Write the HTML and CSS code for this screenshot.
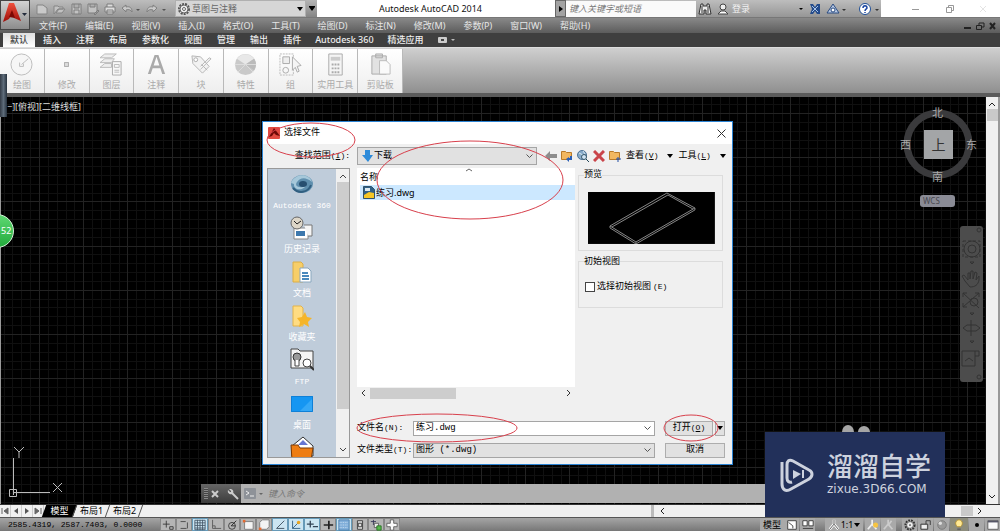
FILE: index.html
```html
<!DOCTYPE html>
<html lang="zh-CN">
<head>
<meta charset="utf-8">
<title>Autodesk AutoCAD 2014</title>
<link rel="stylesheet" href="styles.css">
</head>
<body>
<header class="top">
  <button class="app-button" aria-label="应用程序菜单">
    <svg width="30" height="30" viewBox="0 0 30 30"><defs><linearGradient id="red" x2="0" y2="1"><stop stop-color="#f0503c"/><stop offset="1" stop-color="#9c0d08"/></linearGradient></defs><path d="M9 3h5l7 18-7-3-2-4-3 5-6 3z" fill="url(#red)"/><path d="M12 10l3 8-6-1z" fill="#7c0803"/><path d="M22 13h5l-2.500 3z" fill="#222a3a"/></svg>
  </button>
  <div class="titlebar">
    <div class="quick">
      <button aria-label="新建"><svg width="14" height="14" viewBox="0 0 14 14"><path d="M2 3h6l4 3v6H2z" fill="#c9c9c9" stroke="#858585"/></svg></button>
      <button aria-label="打开"><svg width="14" height="14" viewBox="0 0 14 14"><path d="M2 4h4l1 1h4v2H6l-4 5zM4 11l3-4h6l-3 4z" fill="#c2c2c2" stroke="#858585"/></svg></button>
      <button aria-label="保存"><svg width="14" height="14" viewBox="0 0 14 14"><path d="M3 2h9v10H3zM5 2v4h5V2M5 12V8h5v4" fill="#c2c2c2" stroke="#7d7d7d"/></svg></button>
      <button aria-label="另存为"><svg width="14" height="14" viewBox="0 0 14 14"><path d="M2 2h9v9H2zM4 2v3h5V2M8 12l4-4 1 1-4 4z" fill="#c2c2c2" stroke="#7d7d7d"/></svg></button>
      <button aria-label="打印"><svg width="14" height="14" viewBox="0 0 14 14"><path d="M4 5V2h6v3M2 5h10v5H2zM4 8h6v4H4z" fill="#ddd" stroke="#7d7d7d"/></svg></button>
      <button class="arrowed" aria-label="放弃"><svg width="22" height="14" viewBox="0 0 22 14"><path d="M2 6l4-3v2c4-1 6 1 6 5-1-2-3-3-6-2v2z" fill="#c9c9c9" stroke="#808080"/><path d="M16 7h4l-2 2z" fill="#555"/></svg></button>
      <button class="arrowed" aria-label="重做"><svg width="22" height="14" viewBox="0 0 22 14"><path d="M12 6L8 3v2C4 4 2 6 2 10c1-2 3-3 6-2v2z" fill="#c9c9c9" stroke="#808080"/><path d="M17 7h4l-2 2z" fill="#555"/></svg></button>
    </div>
    <div class="workspace">
      <svg width="14" height="14" viewBox="0 0 14 14"><circle cx="7" cy="7" r="5" fill="#eee" stroke="#555" stroke-width="2" stroke-dasharray="2 1"/><circle cx="7" cy="7" r="4" fill="#eee" stroke="#666"/><circle cx="7" cy="7" r="1.500" fill="#fff" stroke="#666"/></svg>
      <select aria-label="工作空间"><option>草图与注释</option></select>
      <svg class="tri" width="6" height="4"><path d="M0 0h6L3 4z"/></svg>
    </div>
    <button class="customize" aria-label="自定义"><svg width="6" height="5"><path d="M0 0h6v1L3 5 0 1z"/></svg></button>
    <h1>Autodesk AutoCAD 2014</h1>
    <div class="infocenter">
      <button class="expand" aria-label="展开"><svg width="4" height="6"><path d="M0 0l4 3-4 3z"/></svg></button>
      <input class="search" type="text" placeholder="键入关键字或短语" aria-label="搜索">
      <button aria-label="搜索按钮"><svg width="14" height="14" viewBox="0 0 14 14"><path d="M3 2h2v2h4V2h2l2 10H8V8H6v4H1z" fill="#ececec" stroke="#333"/><path d="M4 4v7M10 4v7" stroke="#333"/></svg></button>
      <button class="login"><svg width="14" height="14" viewBox="0 0 14 14"><circle cx="7" cy="5" r="3" fill="#eee" stroke="#444"/><path d="M2 12l3-3h4l3 3z" fill="#fff" stroke="#444"/></svg>登录</button>
      <svg class="login-arrow" width="5" height="4"><path d="M1 1h4L3 3z"/></svg>
      <button aria-label="Exchange"><svg width="14" height="14" viewBox="0 0 14 14"><path d="M2 2h3l2 3 2-3h3v10H9L7 9l-2 3H2l2-5z" fill="#234b8c"/><path d="M4 4l6 6M10 4l-6 6" stroke="#a9c5ea"/></svg></button>
      <button class="arrowed" aria-label="联机"><svg width="22" height="14" viewBox="0 0 22 14"><path d="M8 2l6 9H2z" fill="#b9cae6" stroke="#284a80"/><circle cx="8" cy="8" r="2" fill="#fff" stroke="#284a80"/><path d="M17 7h4l-2 2z" fill="#333"/></svg></button>
      <button class="help" aria-label="帮助"><svg width="22" height="14" viewBox="0 0 22 14"><circle cx="8" cy="7" r="5.500" fill="#fff" stroke="#1f4f97"/><path d="M6 6c0-3 4-3 4 0 0 1-2 1-2 3M8 10v1" fill="none" stroke="#1844a0" stroke-width="1.500"/><path d="M18 7h4l-2 2z" fill="#333"/></svg></button>
    </div>
    <div class="window-controls">
      <button aria-label="最小化"><svg width="8" height="8"><path d="M0 4.500h7" stroke="#999"/></svg></button>
      <button aria-label="还原"><svg width="8" height="8"><path d="M.5 2.500h5v5h-5zM2.500 2V.5h5v5H6" fill="none" stroke="#999"/></svg></button>
      <button aria-label="关闭"><svg width="8" height="8"><path d="M1 1l6 6M7 1L1 7" stroke="#e4e4e4"/></svg></button>
    </div>
  </div>
  <nav class="menubar">
    <button>文件(F)</button><button>编辑(E)</button><button>视图(V)</button><button>插入(I)</button><button>格式(O)</button><button>工具(T)</button><button>绘图(D)</button><button>标注(N)</button><button>修改(M)</button><button>参数(P)</button><button>窗口(W)</button><button>帮助(H)</button>
    <div class="doc-controls">
      <button aria-label="最小化图形"><svg width="8" height="8"><path d="M0 6h7" stroke="#222" stroke-width="2"/></svg></button>
      <button aria-label="还原图形"><svg width="9" height="8"><path d="M.5 3.500h5v4h-5zM3 3V1h5v4H6" fill="none" stroke="#222"/></svg></button>
      <button aria-label="关闭图形"><svg width="8" height="8"><path d="M1 1l5 6M6 1L1 7" stroke="#222" stroke-width="2"/></svg></button>
    </div>
  </nav>
</header>

<nav class="tabs">
  <button class="active">默认</button><button>插入</button><button>注释</button><button>布局</button><button>参数化</button><button>视图</button><button>管理</button><button>输出</button><button>插件</button><button>Autodesk 360</button><button>精选应用</button>
  <button class="minimize" aria-label="最小化功能区"><svg width="18" height="6"><rect width="9" height="6" rx="1" fill="#ccc"/><rect x="3" y="2" width="3" height="2" fill="#444"/><path d="M13 2h4l-2 2z" fill="#bbb"/></svg></button>
</nav>

<section class="ribbon">
  <div class="panels">
    <button><svg viewBox="0 0 24 24"><circle cx="12" cy="12" r="11" fill="#f6f6f6" stroke="#bbb"/><path d="M12 12l7-6M10 10v4h4v-3" fill="none" stroke="#bbb"/></svg>绘图</button>
    <button><svg viewBox="0 0 24 24"><rect x="10" y="10" width="4" height="4" fill="#ddd" stroke="#aaa"/></svg>修改</button>
    <button><svg viewBox="0 0 24 24"><path d="M5 1h12l-5 4H0zM5 6h10l-3 4H0zM5 11h7v4H0z" fill="#eee" stroke="#bbb"/><path d="M13 9h9v14h-9z" fill="#f7f7f7" stroke="#aaa"/><path d="M15 12h5v3h-5zM15 18h5M15 20h5" stroke="#bbb" fill="none"/></svg>图层</button>
    <button><svg viewBox="0 0 24 24"><path d="M3 22L10 2h4l7 20h-3l-2-6H8l-2 6zM9 13h6l-3-9z" fill="#aaa"/></svg>注释</button>
    <button><svg viewBox="0 0 24 24"><path d="M2 3l9 1 9 10-7 7L3 11zM12 12l6 6M11 17L22 6l-2-1-9 9" fill="#f2f2f2" stroke="#b5b5b5"/><circle cx="6" cy="7" r="2" fill="#fff" stroke="#aaa"/></svg>块</button>
    <button><svg viewBox="0 0 24 24"><circle cx="12" cy="12" r="11" fill="#c9c9c9"/><path d="M12 12L3 6a11 11 0 0118 0z" fill="#e8e8e8"/><path d="M12 12L21 6a11 11 0 010 12z" fill="#bbb"/><path d="M1 12h22M12 12l8 8M12 12l-8 8" stroke="#ddd"/></svg>特性</button>
    <button><svg viewBox="0 0 24 24"><path d="M1 1h14v22H1z" fill="none" stroke="#bbb" stroke-dasharray="2 1"/><path d="M4 4h7v7H4z" fill="#eee" stroke="#aaa"/><circle cx="7" cy="18" r="3" fill="none" stroke="#aaa"/><path d="M14 4l9 9-4 1 2 5-2 1-2-5-3 3z" fill="#f5f5f5" stroke="#aaa"/></svg>组</button>
    <button><svg viewBox="0 0 24 24"><path d="M5 1h14v22H5z" fill="#f5f5f5" stroke="#aaa"/><path d="M7 4h10v4H7z" fill="#ccc"/><path d="M8 12h8M8 16h8M8 20h8" stroke="#aaa" stroke-width="2" stroke-dasharray="2 1"/></svg>实用工具</button>
    <button><svg viewBox="0 0 24 24"><path d="M3 3h15v19H3zM7 1h7v4H7z" fill="#e2e2e2" stroke="#aaa"/><path d="M11 8h7l4 4v10H11z" fill="#fafafa" stroke="#bbb"/></svg>剪贴板</button>
  </div>
</section>

<main class="work">
  <div class="canvas">
    <svg class="grid" width="100%" height="100%">
      <defs><pattern id="g" x="38" y="16" width="221" height="221" patternUnits="userSpaceOnUse">
        <path d="M9.500 0v221M18.500 0v221M27.500 0v221M35.500 0v221M53.500 0v221M62.500 0v221M71.500 0v221M80.500 0v221M97.500 0v221M106.500 0v221M115.500 0v221M124.500 0v221M141.500 0v221M150.500 0v221M159.500 0v221M168.500 0v221M186.500 0v221M194.500 0v221M203.500 0v221M212.500 0v221M0 9.500h221M0 18.500h221M0 27.500h221M0 35.500h221M0 53.500h221M0 62.500h221M0 71.500h221M0 80.500h221M0 97.500h221M0 106.500h221M0 115.500h221M0 124.500h221M0 141.500h221M0 150.500h221M0 159.500h221M0 168.500h221M0 186.500h221M0 194.500h221M0 203.500h221M0 212.500h221" stroke="#101010"/>
        <path d="M.5 0v221M44.500 0v221M88.500 0v221M133.500 0v221M177.500 0v221M0 .5h221M0 44.500h221M0 88.500h221M0 133.500h221M0 177.500h221" stroke="#232323"/>
      </pattern></defs>
      <rect width="100%" height="100%" fill="url(#g)"/>
    </svg>
    <div class="viewport-label">−][俯视][二维线框]</div>
    <div class="dock-handle"></div>
    <div class="badge">52</div>

    <svg class="ucs" width="64" height="60" viewBox="0 0 64 60"><path d="M10.500 15v37M13 49.500h34M6.500 46.500h7v7h-7zM10.500 50v-3M10 49.500h3" fill="none" stroke="#bbb"/><path d="M11 4l5 5 5-5M16 9v6M50 40l9 9M59 40l-9 9" fill="none" stroke="#bbb"/></svg>

    <div class="viewcube">
      <svg width="72" height="72" viewBox="0 0 72 72"><circle cx="36" cy="36" r="31" fill="none" stroke="#3a3a3c" stroke-width="7"/></svg>
      <span class="n">北</span><span class="w">西</span><span class="e">东</span><span class="s">南</span>
      <button class="face">上</button>
    </div>
    <button class="wcs">WCS</button>

    <div class="navbar">
      <svg width="23" height="156" viewBox="0 0 23 156" fill="none" stroke="#333"><circle cx="19" cy="4" r="2"/><circle cx="12" cy="23" r="8"/><circle cx="12" cy="23" r="4"/><path d="M3 15h17v16H3z" stroke-dasharray="3 2"/><path d="M10 36h4l-2 2z"/><path d="M5 55l-3-5 2-1 4 5v-7h2v6l1-8h2v8l2-7 2 1-1 7 3-4v4c-1 5-4 7-9 7zM3 67l16 15M19 67L3 81M3 71v-4h4M15 67h4v4M3 77v4h4"/><circle cx="14" cy="76" r="4"/><path d="M10 87h4l-2 2zM11 94v16M3 102l4-3h9l4 3-4 3H7zM10 115h4l-2 2zM2 125h13v15H2zM15 125h4v5h-4M5 135l4-3 4 3"/><circle cx="19" cy="151" r="2"/></svg>
    </div>

    <form class="command">
      <div class="command-tools"><span class="grip"></span>
        <button type="button" aria-label="关闭命令行"><svg width="8" height="8"><path d="M1 1l6 6M7 1L1 7" stroke="#ccc" stroke-width="2"/></svg></button>
        <button type="button" aria-label="自定义命令行"><svg width="12" height="12"><path d="M5 5l6 6" stroke="#ccc" stroke-width="2"/><path d="M2 1l2 2v1H3L1 2c-1 3 2 5 4 4s2-4-1-5z" fill="#ccc"/></svg></button>
      </div>
      <button class="prompt" type="button" aria-label="最近使用的命令"><svg width="19" height="11"><rect width="12" height="11" rx="1" fill="#8e9298"/><path d="M2 3l3 2-3 2M6 8h4" stroke="#eee" fill="none"/><path d="M15 5h4l-2 2z" fill="#666"/></svg></button>
      <input type="text" placeholder="键入命令" aria-label="命令">
    </form>

    <section class="dialog" role="dialog" aria-label="选择文件">
      <div class="dialog-title">
        <svg width="13" height="12" viewBox="0 0 13 12"><rect width="12" height="12" rx="1" fill="#e04a41"/><path d="M1 10L6 1l6 8-4-1-2-2-2 3z" fill="#6d0806"/></svg>
        <h2>选择文件</h2>
        <button aria-label="关闭"><svg width="9" height="9"><path d="M.5.500l8 8M8.500.500l-8 8" stroke="#333"/></svg></button>
      </div>
      <div class="dialog-body">
        <label class="look-label" for="look">查找范围<span class="key">(<u>I</u>):</span></label>
        <div class="look-row">
          <div class="combo gray look">
            <svg class="combo-icon" width="11" height="12"><path d="M3 0h5v5h3l-5 7-6-7h3z" fill="#2e8bd9"/></svg>
            <select id="look"><option>下载</option></select>
            <svg class="chev" width="7" height="5"><path d="M.5.500l3 3 3-3" fill="none" stroke="#555"/></svg>
          </div>
          <div class="file-tools">
            <button aria-label="返回"><svg width="12" height="12"><path d="M0 6l5-5v3h7v4H5v3z" fill="#8d8d8d"/></svg></button>
            <button aria-label="上一级"><svg width="12" height="12"><path d="M.5 1.500h4l1 1h5v7H.5z" fill="#f2b760" stroke="#b97a2a"/><path d="M11 6v4H8v2L5 9l3-2v1h1V6z" fill="#2b5fb5"/></svg></button>
            <button aria-label="搜索 Web"><svg width="12" height="12"><circle cx="5" cy="5" r="4.500" fill="#87aac9" stroke="#4d7397"/><path d="M2 3l4 2-2 3M6 1l2 3" stroke="#d5e6ef" fill="none"/><circle cx="7" cy="7" r="2.500" fill="#cfe3f4" stroke="#356"/><path d="M9 9l3 3" stroke="#245"/></svg></button>
            <button aria-label="删除"><svg width="12" height="12"><path d="M1 1l10 10M11 1L1 11" stroke="#c9444a" stroke-width="3"/></svg></button>
            <button aria-label="创建新文件夹"><svg width="12" height="12"><path d="M.5 1.500h4l1 1h5v7H.5z" fill="#f2b760" stroke="#b97a2a"/><path d="M9 7v5M7 9h5" stroke="#234fa5"/></svg></button>
          </div>
          <button class="text-menu">查看<span class="key">(<u>V</u>)</span><svg width="6" height="4"><path d="M0 0h6L3 4z"/></svg></button>
          <button class="text-menu">工具<span class="key">(<u>L</u>)</span><svg width="6" height="4"><path d="M0 0h6L3 4z"/></svg></button>
        </div>

        <div class="places">
          <div class="place-list">
            <button><svg viewBox="0 0 24 24"><ellipse cx="12" cy="12" rx="11" ry="9" fill="#5f8fae"/><path d="M1 11C5 1 19 1 22 10c-7-6-12-4-15 0s2 7 9 4c-5 6-13 3-12-2" fill="#a6c8da"/><ellipse cx="13" cy="12" rx="4" ry="3" fill="#274f70"/><path d="M3 16c5 6 15 5 18-3" stroke="#315f80" stroke-width="2" fill="none"/></svg><span class="key">Autodesk 360</span></button>
            <button><svg viewBox="0 0 24 24"><path d="M4 12h14v11H4z" fill="#fff" stroke="#888"/><path d="M6 15h9v5H6z" fill="#3d78ad"/><path d="M14 9h8v11h-4" fill="#f5f5f5" stroke="#777"/><circle cx="7" cy="7" r="6" fill="#ddd6c8" stroke="#666"/><path d="M4 5l3 3 4-3" stroke="#222" fill="none"/></svg>历史记录</button>
            <button><svg viewBox="0 0 24 24"><path d="M3 2h8l2 2v18H3z" fill="#f7ce68" stroke="#dbae46"/><path d="M10 8h8l3 3v11H10z" fill="#fff" stroke="#8aa7be"/><path d="M12 13h6M12 16h7M12 19h7" stroke="#4989bd" stroke-width="2"/></svg>文档</button>
            <button><svg viewBox="0 0 24 24"><path d="M3 2h8l2 2v18H3z" fill="#ffdc82" stroke="#e3b34a"/><path d="M15 8l2 5 5 1-4 4 1 5-5-3-5 3 1-5-3-4 5-1z" fill="#f5b52a"/></svg>收藏夹</button>
            <button><svg viewBox="0 0 24 24"><path d="M1 1h7l2 2h13v17H1z" fill="#f4f4f4" stroke="#444"/><circle cx="7" cy="9" r="4" fill="#999" stroke="#333"/><path d="M5 12v6h4v-6" fill="#fff" stroke="#444"/><circle cx="17" cy="15" r="4" fill="#fff" stroke="#444"/><path d="M20 18l4 4" stroke="#333" stroke-width="2"/></svg><span class="key">FTP</span></button>
            <button><svg viewBox="0 0 24 24"><path d="M1 4h22v16H1z" fill="#1596f2"/><path d="M9 20L23 6v14z" fill="#34a8f7"/><path d="M1.500 4.500h21v15h-21z" fill="none" stroke="#0f80d7"/></svg>桌面</button>
            <button aria-label="Buzzsaw"><svg viewBox="0 0 24 24"><path d="M2 10L13 1l10 9v10H2z" fill="#fff" stroke="#333"/><path d="M8 9l5-5 5 5z" fill="#6576d3"/><path d="M1 9h7l2 3h13l-2 12H2z" fill="#ee7d13" stroke="#7c3b05"/></svg></button>
          </div>
          <div class="vscroll"><svg width="8" height="6"><path d="M1 5l3-3 3 3" fill="none" stroke="#444"/></svg><i></i><svg width="8" height="6"><path d="M1 1l3 3 3-3" fill="none" stroke="#444"/></svg></div>
        </div>

        <div class="browser">
          <div class="file-pane">
            <table class="files">
              <thead><tr><th>名称<svg class="sort" width="8" height="4"><path d="M1 3l3-2 3 2" fill="none" stroke="#666"/></svg></th></tr></thead>
              <tbody><tr><td><svg width="12" height="13"><path d="M.5.500h8l3 3v9H.5z" fill="#2f6087" stroke="#315269"/><path d="M2 2h5v3H2z" fill="#dce9ef"/><path d="M1 9l5-3 5 1v5H1z" fill="#f5c626"/></svg>练习.dwg</td></tr></tbody>
            </table>
            <div class="hscroll"><svg width="6" height="8"><path d="M5 1L2 4l3 3" fill="none" stroke="#333" stroke-width="1"/></svg><i></i><svg width="6" height="8"><path d="M1 1l3 3-3 3" fill="none" stroke="#333"/></svg></div>
          </div>
          <div class="side">
            <fieldset class="preview"><legend>预览</legend>
              <svg viewBox="0 0 127 52"><rect width="127" height="52"/><path d="M22 34L79 1l28 15-59 34zM22 36l26 16 59-34M24 35l56-32 25 14M22 34v2M48 50v2M107 16v2" fill="none" stroke="#888"/></svg>
            </fieldset>
            <fieldset class="initial"><legend>初始视图</legend>
              <label><input type="checkbox">选择初始视图<span class="key">(E)</span></label>
            </fieldset>
          </div>
        </div>

        <div class="file-form">
          <label for="fname">文件名<span class="key">(N):</span></label>
          <div class="combo"><input id="fname" type="text" value="练习.dwg"><svg class="chev" width="7" height="5"><path d="M.5.500l3 3 3-3" fill="none" stroke="#555"/></svg></div>
          <div class="split"><button>打开<span class="key">(<u>O</u>)</span></button><button aria-label="打开选项"><svg width="6" height="4"><path d="M0 0h6L3 4z"/></svg></button></div>
          <label for="ftype">文件类型<span class="key">(T):</span></label>
          <div class="combo gray"><select id="ftype"><option>图形 (*.dwg)</option></select><svg class="chev" width="7" height="5"><path d="M.5.500l3 3 3-3" fill="none" stroke="#555"/></svg></div>
          <button class="push">取消</button>
        </div>
      </div>
      <svg class="marks" viewBox="0 0 471 344" fill="none" stroke="#d8404c"><ellipse cx="49" cy="19" rx="44" ry="17"/><ellipse cx="208" cy="59" rx="93" ry="39"/><ellipse cx="175" cy="307" rx="80" ry="14"/><ellipse cx="429" cy="307" rx="27" ry="13"/></svg>
    </section>
  </div>
  <div class="canvas-scroll"><svg width="8" height="6"><path d="M1 5l3-3 3 3" fill="none" stroke="#222"/></svg><i></i><svg class="last" width="8" height="6"><path d="M1 1l3 3 3-3" fill="none" stroke="#222"/></svg></div>

  <div class="watermark">
    <svg class="bumps" width="30" height="8"><path d="M0 8a6 7 0 0112 0zM16 8a6 6 0 0112 0z" fill="#a5a5a5"/></svg>
    <svg width="34" height="36" viewBox="0 0 34 36" fill="none" stroke="#cdd2de" stroke-width="3"><path d="M2 5v22c0 6 4 8 9 5l18-10c4-3 4-7 0-9L13 4C9 2 7 4 7 8v13c0 3 2 5 5 4"/><path d="M13 13l8 4-8 5z" fill="#cdd2de" stroke="none"/><path d="M23 13v8" stroke-width="2"/></svg>
    <div class="brand"><strong>溜溜自学</strong><span>zixue.3D66.COM</span></div>
  </div>
</main>

<nav class="sheets">
  <button aria-label="第一个"><svg width="8" height="8"><path d="M1 1v6M7 1L3 4l4 3z" stroke="#666" fill="#666"/></svg></button>
  <button aria-label="上一个"><svg width="8" height="8"><path d="M6 1L2 4l4 3z" fill="#555"/></svg></button>
  <button aria-label="下一个"><svg width="8" height="8"><path d="M2 1l4 3-4 3z" fill="#555"/></svg></button>
  <button aria-label="最后一个"><svg width="8" height="8"><path d="M7 1v6M1 1l4 3-4 3z" stroke="#666" fill="#666"/></svg></button>
  <button class="sheet current">模型</button><button class="sheet">布局1</button><button class="sheet">布局2</button>
  <div class="sheet-scroll"><svg width="6" height="8"><path d="M5 1L2 4l3 3" fill="none" stroke="#222"/></svg><i></i><svg width="6" height="8"><path d="M1 1l3 3-3 3" fill="none" stroke="#222"/></svg></div>
</nav>

<footer class="status">
  <output>2585.4319, 2587.7403, 0.0000</output>
  <div class="toggles">
    <button aria-label="推断约束"><svg viewBox="0 0 14 14"><path d="M1 6h8M5 2v8M9 9h4v3H9z" stroke="#333" fill="none"/></svg></button>
    <button aria-label="捕捉"><svg viewBox="0 0 14 14"><path d="M3 3h6M3 11h8V4" stroke="#444" stroke-dasharray="7 1" fill="none"/></svg></button>
    <button class="on" aria-label="栅格"><svg viewBox="0 0 14 14"><path d="M1 1.500h12v11H1zM4 1v12M7 1v12M10 1v12M1 4.500h12M1 7.500h12M1 10.500h12" stroke="#456" fill="none"/></svg></button>
    <button aria-label="正交"><svg viewBox="0 0 14 14"><path d="M3 1v10h10M3 8h3v3" stroke="#555" fill="none"/></svg></button>
    <button aria-label="极轴"><svg viewBox="0 0 14 14"><circle cx="7" cy="8" r="4" stroke="#333" fill="none"/><path d="M6 8l6-6M6 8h5" stroke="#222"/></svg></button>
    <button aria-label="对象捕捉"><svg viewBox="0 0 14 14"><path d="M3 3h10v9H3z" fill="#f4f4f4" stroke="#777"/><path d="M1 1h3v3H1z" fill="#e66b31"/></svg></button>
    <button aria-label="三维对象捕捉"><svg viewBox="0 0 14 14"><path d="M2 4l3-3h8v8l-3 3H2z" fill="#f4f4f4" stroke="#777"/><path d="M1 10h3v3H1z" fill="#e66b31"/></svg></button>
    <button class="on" aria-label="对象追踪"><svg viewBox="0 0 14 14"><path d="M12 2L3 11h9" stroke="#345" fill="none"/></svg></button>
    <button class="on" aria-label="动态 UCS"><svg viewBox="0 0 14 14"><path d="M3 2v9h9M3 11l7-7" stroke="#27577a" fill="none"/><circle cx="10" cy="4" r="2" fill="#eaa620"/></svg></button>
    <button class="on" aria-label="动态输入"><svg viewBox="0 0 14 14"><path d="M1 6h8M5 2v8M8 9h6" stroke="#345" stroke-width="1.500"/></svg></button>
    <button aria-label="线宽"><svg viewBox="0 0 14 14"><path d="M2 7h11M8 2v10" stroke="#222" stroke-width="2"/></svg></button>
    <button class="on" aria-label="透明度"><svg viewBox="0 0 14 14"><path d="M1 1h12v12H1z" fill="#81afda" stroke="#477ba8"/><path d="M2 4h10M2 7h10M2 10h10" stroke="#d2e4f4" stroke-dasharray="1 1"/></svg></button>
    <button aria-label="快捷特性"><svg viewBox="0 0 14 14"><path d="M4 2h6v10H4zM5 5h4v4H5z" stroke="#333" fill="#ddd"/></svg></button>
    <button aria-label="选择循环"><svg viewBox="0 0 14 14"><path d="M1 3h6M4 1v6" stroke="#335"/><path d="M5 5h5v5H5z" fill="#eee" stroke="#555"/><path d="M8 8h5v5H8z" fill="#55b94a" stroke="#24721f"/></svg></button>
    <button aria-label="注释监视器"><svg viewBox="0 0 14 14"><path d="M5 1h4v4h4v4H9v4H5V9H1V5h4z" fill="#fafafa" stroke="#555"/></svg></button>
  </div>
  <div class="tray">
    <button class="label">模型</button>
    <button aria-label="快速查看布局"><svg viewBox="0 0 14 14"><path d="M2 2h10v10H2z" fill="#fff" stroke="#333"/><path d="M3 4l5 4v3" stroke="#333" fill="none"/></svg></button>
    <button class="views" aria-label="快速查看图形"><svg viewBox="0 0 14 14"><path d="M1 2h5v6H1zM8 2h5v6H8zM1 11h12" fill="#fff" stroke="#333"/></svg></button>
    <button class="label scale"><svg viewBox="0 0 14 14"><path d="M7 1v5L2 12M7 6l5 6" stroke="#fff" stroke-width="3" fill="none"/><path d="M7 1v5L2 12M7 6l5 6" stroke="#444" fill="none"/></svg>1:1<svg class="small" viewBox="0 0 6 6"><path d="M0 1h6L3 5z"/></svg></button>
    <button aria-label="注释可见性"><svg viewBox="0 0 14 14"><path d="M6 1v5L1 12M6 6l5 6" stroke="#eee" stroke-width="2" fill="none"/><circle cx="10" cy="7" r="3" fill="#f6c443"/></svg></button>
    <button aria-label="自动缩放"><svg viewBox="0 0 14 14"><path d="M6 1v5L1 12M6 6l5 6M10 2l-3 4" stroke="#ccc" stroke-width="2" fill="none"/></svg></button>
    <button class="gear" aria-label="工作空间切换"><svg viewBox="0 0 14 14"><circle cx="7" cy="7" r="5" fill="#eee" stroke="#333" stroke-width="3" stroke-dasharray="2 1"/><circle cx="7" cy="7" r="4" fill="#eee" stroke="#555"/><circle cx="7" cy="7" r="1" fill="#333"/></svg></button>
    <button aria-label="锁定"><svg viewBox="0 0 14 14"><path d="M1 6h8v6H1zM7 6V2h5v5" fill="none" stroke="#333"/><path d="M2 7h6v4H2z" fill="#eee"/></svg></button>
    <button aria-label="硬件加速"><svg viewBox="0 0 14 14"><circle cx="7" cy="7" r="5" fill="#999" stroke="#777"/><circle cx="5" cy="5" r="2" fill="#ddd"/></svg></button>
    <button class="bulb" aria-label="隔离对象"><svg viewBox="0 0 14 14"><path d="M5 9C1 5 4 1 7 1s6 4 2 8z" fill="#ffe993" stroke="#b28f2d"/><path d="M5 11h4v2H5z" fill="#666"/></svg></button>
    <button aria-label="状态栏菜单"><svg class="small" viewBox="0 0 6 6"><circle cx="3" cy="3" r="2"/></svg></button>
    <button aria-label="全屏显示"><svg viewBox="0 0 14 14"><path d="M1 2h12v10H1z" fill="#fafafa" stroke="#555"/><path d="M1 3h12" stroke="#556" stroke-width="2"/></svg></button>
  </div>
</footer>
</body>
</html>
```
FILE: styles.css
```css
* { box-sizing: border-box; }
body {
  margin: 0;
  height: 100vh;
  display: flex;
  flex-direction: column;
  overflow: hidden;
  background: #555;
  font: 9px/12px "Noto Sans", "Noto Sans CJK SC", sans-serif;
  color: #000;
}
button, input, select {
  font: inherit;
  color: inherit;
  border: 0;
  padding: 0;
  margin: 0;
  background: none;
  border-radius: 0;
  min-width: 0;
}
select { appearance: none; }
h1, h2 { margin: 0; font-weight: 400; }
svg { display: block; flex: none; }
button { display: flex; align-items: center; justify-content: center; white-space: nowrap; }

/* Title and menus */
.top {
  display: grid;
  grid-template-columns: 30px 1fr;
  grid-template-rows: 18px 15px;
  background: linear-gradient(#8d8d8d 50%, #5c5c5c);
}
.app-button {
  grid-row: 1 / 3;
  height: 30px;
  background: linear-gradient(#d2d2d2, #8c8c8c);
  border: 1px solid #444;
}
.titlebar { display: flex; background: #fff; border-bottom: 1px solid #777; }
.quick {
  display: flex;
  align-items: center;
  gap: 3px;
  width: 145px;
  padding-left: 5px;
  background: linear-gradient(#bdbdbd, #969696);
}
.workspace {
  display: flex;
  align-items: center;
  width: 131px;
  padding: 0 2px 0 1px;
  background: #d6d6d6;
  border: 1px solid #b0b0b0;
  color: #666;
}
.workspace select { flex: 1; padding-left: 1px; }
.customize { width: 11px; background: linear-gradient(#b5b5b5, #858585); }
.titlebar h1 { flex: 1; text-align: center; font-size: 9px; line-height: 18px; padding-right: 11px; color: #111; }
.infocenter { display: flex; align-items: center; width: 326px; background: linear-gradient(#bdbdbd, #969696); }
.infocenter .expand { width: 11px; height: 17px; background: #a2a2a2; border: 1px solid #666; }
.search { width: 130px; height: 16px; padding-left: 3px; background: #fafafa; margin-right: 2px; }
.search::placeholder, .command input::placeholder { color: #777; font-style: italic; opacity: 1; }
.login { color: #f2f2f2; gap: 2px; margin-left: 4px; }
.login-arrow { margin-left: auto; }
.login-arrow + button { margin-left: 5px; }
.infocenter .arrowed { margin-left: 3px; }
.help { margin: 0 2px 0 10px; }
.window-controls { display: flex; align-items: center; justify-content: space-between; width: 119px; padding: 0 13px 0 31px; }
.menubar { display: flex; align-items: center; gap: 18px; padding-left: 9px; color: #e6e6e6; }
.doc-controls { display: flex; gap: 4px; margin: 0 3px 0 auto; }

/* Ribbon */
.tabs { display: flex; height: 14px; padding-left: 3px; background: #3f3f3f; color: #eee; font-weight: 500; }
.tabs button { padding: 0 7px; line-height: 14px; margin-right: 1px; }
.tabs .active { background: linear-gradient(#e0e0e0, #fff); color: #444; }
.tabs .minimize { margin-left: 0; }
.tabs :nth-child(10) { margin: 0 -5px 0 -1px; }
.tabs :nth-child(n+10) { margin-right: 0; }
.ribbon {
  height: 50px;
  padding: 1px 0;
  background: linear-gradient(#cfcfcf, #8f8f8f);
  border-top: 1px solid #ddd;
  border-bottom: 4px solid #5b5b5b;
}
.panels { display: flex; width: 403px; height: 44px; }
.panels button {
  flex: 1;
  flex-direction: column;
  gap: 3px;
  padding-top: 2px;
  background: linear-gradient(#fff, #eee);
  border-right: 1px solid #b9b9b9;
  color: #aaa;
}
.panels svg { width: 23px; height: 23px; }

/* Drawing area */
.work { position: relative; flex: 1; display: flex; min-height: 0; }
.canvas { position: relative; flex: 1; background: #000; border-left: 1px solid #999; }
.grid { position: absolute; inset: 0; }
.viewport-label { position: relative; padding: 4px 0 0 6px; color: #ddd; }
.dock-handle { position: absolute; left: -1px; top: -23px; width: 7px; height: 43px; background: linear-gradient(90deg, #333b46, #5e6c7a, #27323e); }
.badge {
  position: absolute;
  left: -21px;
  top: 117px;
  width: 34px;
  height: 34px;
  border: 1px solid #d5f3d8;
  border-radius: 50%;
  background: linear-gradient(#5fd873, #22ab3c);
  color: #fff;
  line-height: 32px;
  padding-left: 20px;
}
.ucs { position: absolute; left: 2px; bottom: 1px; }
.viewcube { position: absolute; right: 12px; top: 11px; width: 72px; height: 72px; color: #aaa; font-size: 11px; }
.viewcube span { position: absolute; }
.viewcube .n { left: 30px; top: -1px; }
.viewcube .s { left: 30px; bottom: -3px; }
.viewcube .w { left: -2px; top: 31px; }
.viewcube .e { right: -3px; top: 31px; }
.viewcube .face { position: absolute; left: 22px; top: 22px; width: 29px; height: 29px; background: #a3a5a7; color: #333; font-size: 14px; }
.wcs { position: absolute; right: 31px; top: 98px; width: 35px; height: 12px; border-radius: 3px; background: #8a8b95; color: #484850; justify-content: flex-start; padding-left: 3px; font-size: 8px; }
.navbar { position: absolute; right: 3px; top: 129px; border-radius: 3px; background: #4c4c4c; }
.command {
  position: absolute;
  left: 200px;
  right: 41px;
  bottom: 1px;
  height: 19px;
  display: flex;
  align-items: center;
  background: #b1b1b1;
}
.command-tools { display: flex; align-items: center; align-self: stretch; gap: 8px; width: 40px; padding: 0 3px; background: linear-gradient(#666, #3c3c3c); }
.grip { width: 4px; height: 12px; background: repeating-linear-gradient(#888 0 1px, #444 1px 2px); margin-right: -4px; }
.prompt { margin-left: 3px; }
.command input { flex: 1; padding-left: 5px; }
.canvas-scroll { width: 14px; display: flex; flex-direction: column; align-items: center; gap: 2px; padding: 4px 0; background: #f0f0f0; border-right: 2px solid #999; }
.canvas-scroll i { width: 11px; height: 12px; background: #c9c9c9; }
.canvas-scroll .last { margin-top: auto; }

/* Watermark */
.watermark {
  position: absolute;
  z-index: 3;
  right: 55px;
  bottom: -13px;
  width: 180px;
  height: 85px;
  display: flex;
  align-items: center;
  gap: 13px;
  padding-left: 15px;
  background: #22305a;
  color: #cdd2de;
}
.bumps { position: absolute; left: 77px; top: -8px; }
.brand { display: flex; flex-direction: column; gap: 3px; padding-bottom: 2px; }
.brand strong { font-size: 26px; line-height: 28px; font-weight: 500; }
.brand span { font: 12px/12px "DejaVu Sans", sans-serif; }

/* File dialog */
.dialog {
  position: absolute;
  left: 261px;
  top: 24px;
  width: 471px;
  background: #f0f0f0;
  border: 1px solid #2b83d3;
  font-family: "Liberation Mono", "Noto Sans CJK SC", monospace;
}
.key { font-size: 8px; }
.dialog-title { display: flex; align-items: center; gap: 3px; height: 22px; padding: 0 6px 0 5px; background: #fff; }
.dialog-title h2 { flex: 1; font-size: 9px; }
.dialog-body {
  display: grid;
  grid-template-columns: 83px 1fr;
  grid-template-rows: 18px 234px 59px;
  column-gap: 7px;
  padding: 3px 6px 6px 4px;
}
.look-label { justify-self: end; align-self: center; white-space: nowrap; }
.look-row { display: flex; align-items: center; }
.combo { position: relative; display: flex; align-items: center; border: 1px solid #a5a5a5; background: #fff; height: 15px; }
.combo.gray { background: #e1e1e1; }
.combo input, .combo select { flex: 1; padding: 0 12px 0 2px; }
.combo .chev { position: absolute; right: 3px; }
.look { width: 180px; height: 18px; }
.look select { padding-left: 16px; }
.combo-icon { position: absolute; left: 4px; }
.file-tools { display: flex; gap: 4px; margin: 0 5px 0 8px; }
.text-menu { padding-right: 5px; }
.text-menu svg { margin-left: 9px; }
.places { grid-row: 2 / 4; display: flex; min-height: 0; margin-top: 3px; border: 1px solid #999; background: #bfccda; }
.place-list { flex: 1; overflow: hidden; color: #fff; padding-top: 3px; }
.place-list button { flex-direction: column; width: 100%; height: 44px; gap: 4px; justify-content: flex-start; }
.place-list svg { width: 24px; height: 24px; }
.vscroll { width: 13px; display: flex; flex-direction: column; align-items: center; justify-content: space-between; padding: 4px 0; background: #f0f0f0; }
.vscroll i { width: 12px; flex: 1; background: #cdcdcd; margin: 3px 0 38px; }
.browser { display: grid; grid-template-columns: 218px 1fr; gap: 3px; padding-right: 3px; }
.file-pane { display: flex; flex-direction: column; justify-content: space-between; margin-top: 3px; background: #fff; }
.files { width: 100%; border-collapse: collapse; font-family: "Noto Sans", "Noto Sans CJK SC", sans-serif; }
.files th, .files td { padding: 0 3px; text-align: left; font-weight: 400; height: 17px; }
.files th { position: relative; }
.files td { display: flex; align-items: center; gap: 1px; height: 15px; margin-left: 3px; background: #cce8ff; }
.sort { position: absolute; left: 108px; top: 0; }
.hscroll { display: flex; align-items: center; gap: 4px; height: 12px; padding: 0 3px; background: #f0f0f0; }
.hscroll i { width: 86px; height: 11px; background: #cdcdcd; margin-right: auto; }
.side { display: flex; flex-direction: column; gap: 5px; padding: 4px 5px 0 0; }
fieldset { min-width: 0; margin: 0; border: 1px solid #dcdcdc; padding: 6px 7px 6px 9px; }
legend { padding: 0; margin-left: -4px; }
.preview svg { width: 100%; height: auto; margin-top: 5px; }
.initial { padding-bottom: 14px; }
.initial label { display: flex; align-items: center; gap: 2px; margin: 7px 0 0 -3px; white-space: nowrap; }
.initial input { appearance: none; width: 10px; height: 10px; border: 1px solid #444; background: #fff; }
.file-form {
  display: grid;
  grid-template-columns: 56px 242px 10px 60px;
  grid-template-rows: 16px 16px;
  row-gap: 6px;
  align-content: end;
  align-items: center;
  white-space: nowrap;
}
.split, .push { grid-column: 4; }
.split { display: flex; gap: 2px; }
.split button, .push { height: 15px; background: #e1e1e1; border: 1px solid #adadad; }
.split button:first-child { flex: 1; }
.split button:last-child { width: 10px; }
.marks { position: absolute; left: -1px; top: -1px; width: 471px; height: 344px; pointer-events: none; }

/* Layout tabs */
.sheets { display: flex; align-items: stretch; height: 13px; background: #f0f0f0; border-top: 1px solid #333; }
.sheets > button:not(.sheet) { width: 11px; border-right: 1px solid #ccc; }
.sheet { position: relative; z-index: 0; width: 33px; line-height: 12px; }
.sheet::before {
  content: "";
  position: absolute;
  z-index: -1;
  inset: 0;
  border-right: 1px solid #555;
  transform: skewX(-20deg);
}
.sheet.current { color: #fff; width: 31px; }
.sheet.current::before { background: #000; }
.sheet-scroll { display: flex; align-items: center; width: 349px; margin-left: auto; border-left: 3px solid #bbb; padding: 0 17px 0 5px; gap: 4px; }
.sheet-scroll i { margin-left: auto; width: 12px; height: 10px; background: #c9c9c9; }

/* Status bar */
.status { display: flex; align-items: center; height: 14px; background: linear-gradient(#a5a5a5, #777); border-top: 1px solid #555; }
.status output { width: 160px; padding-left: 8px; font: 8px/12px "Liberation Mono", monospace; white-space: nowrap; }
.toggles, .tray { display: flex; height: 13px; }
.toggles button { width: 16px; background: #b5b5b5; border: 1px solid #888; }
.toggles .on { background: #cbe5f2; border-color: #669ab8; }
.status svg { width: 12px; height: 12px; }
.status svg.small { width: 6px; height: 6px; }
.tray { margin-left: auto; gap: 1px; }
.tray button { width: 15px; background: #a9a9a9; }
.tray .label { width: 24px; }
.tray button:first-child { margin-right: -1px; }
.tray .views { margin-right: 9px; }
.tray .scale { width: 38px; gap: 1px; margin-right: 1px; }
.tray .gear { margin-left: 5px; }
.tray .bulb { width: 18px; background: #8c8c7c; }
```
